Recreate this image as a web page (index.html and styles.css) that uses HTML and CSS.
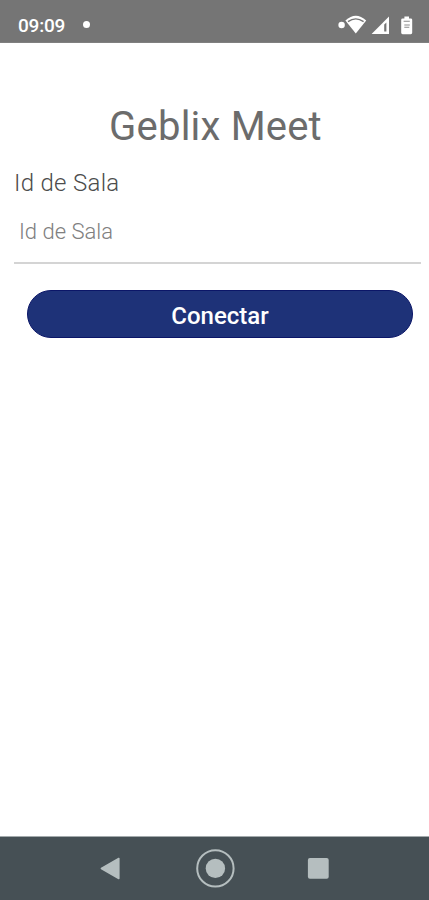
FILE: index.html
```html
<!DOCTYPE html>
<html lang="es">
<head>
    <meta charset="UTF-8">
    <meta name="viewport" content="width=device-width, initial-scale=1.0">
    <title>Geblix Meet</title>
    <link rel="stylesheet" href="styles.css">
</head>
<body>
    <header class="status-bar">
        <span class="time">09:09</span>
        <span class="dot"></span>
        <svg class="status-icons" width="78" height="24" viewBox="0 0 78 24">
            <circle cx="4.6" cy="12" r="3.2" fill="#fff"/>
            <path d="M8.4 7.6 Q18.8 -2.2 29.2 7.6 L18.8 20.4 Z" fill="#fff"/>
            <path d="M11 8.6 Q18.8 3.2 26.6 8.6" fill="none" stroke="#757575" stroke-width="1.4"/>
            <path d="M34.6 21 L52 3.6 V21 Z" fill="#fff"/>
            <path d="M47.2 11.6 L49.4 9.6 V18.4 H47.2 Z" fill="#757575"/>
            <path d="M67.4 3.6 H72 V5.4 H73.8 Q75.2 5.4 75.2 6.8 V19.8 Q75.2 21.2 73.8 21.2 H65.6 Q64.2 21.2 64.2 19.8 V6.8 Q64.2 5.4 65.6 5.4 H67.4 Z" fill="#fff"/>
            <path d="M66.6 8.2 H72.8 M67.3 12 H72.8 M67.3 14.2 H72.3" stroke="#8b8b8b" stroke-width="1.1"/>
        </svg>
    </header>

    <main class="container">
        <h1>Geblix Meet</h1>
        <label for="roomId">Id de Sala</label>
        <input type="text" id="roomId" placeholder="Id de Sala">
        <button type="button">Conectar</button>
    </main>

    <nav class="nav-bar">
        <svg class="nav-icon" width="40" height="40" viewBox="0 0 40 40">
            <path d="M10.4 20.5 L27.8 10.5 V30.5 Z" fill="#b5bebf" stroke="#b5bebf" stroke-width="1.6" stroke-linejoin="round"/>
        </svg>
        <svg class="nav-icon" width="40" height="40" viewBox="0 0 40 40">
            <circle cx="20.4" cy="20.4" r="18.2" fill="none" stroke="#b5bebf" stroke-width="2"/>
            <circle cx="20.4" cy="20.4" r="9.7" fill="#b5bebf"/>
        </svg>
        <svg class="nav-icon" width="40" height="40" viewBox="0 0 40 40">
            <rect x="8.9" y="10" width="20.8" height="20.8" rx="2" fill="#b5bebf"/>
        </svg>
    </nav>
</body>
</html>
```

FILE: styles.css
```css
* {
    box-sizing: border-box;
}
body {
    display: flex;
    flex-direction: column;
    height: 900px;
    margin: 0;
    font-family: Roboto, sans-serif;
    background: #fff;
}
.status-bar {
    display: flex;
    align-items: center;
    height: 43px;
    padding: 8px 14px 0 18px;
    background: #757575;
    border-bottom: 1px solid #808080;
    color: #fff;
}
.time {
    font-size: 19px;
    font-weight: 500;
    letter-spacing: -0.2px;
}
.dot {
    width: 7px;
    height: 7px;
    margin-left: 18px;
    margin-top: -2px;
    border-radius: 50%;
    background: #fff;
}
.status-icons {
    margin-left: auto;
    margin-top: -1px;
}
.container {
    display: flex;
    flex: 1;
    flex-direction: column;
    padding: 60px 8px 0 14px;
}
h1 {
    margin: 0 0 12px;
    padding-right: 4px;
    font-size: 40px;
    font-weight: 400;
    line-height: 48px;
    letter-spacing: 0.2px;
    text-align: center;
    color: #6c6c6c;
}
label {
    font-size: 24px;
    font-weight: 300;
    line-height: 40px;
    letter-spacing: 0.3px;
    color: #4c4c4c;
}
input {
    height: 61px;
    padding: 0 5px 2px;
    border: none;
    border-bottom: 2px solid #d4d4d4;
    background: none;
    font-family: inherit;
    font-size: 22px;
    font-weight: 300;
}
input::placeholder {
    color: #808080;
}
button {
    height: 48px;
    margin: 26px 8px 0 13px;
    padding: 3px 0 0;
    border: 1px solid #0b1668;
    border-radius: 24px;
    background: #1e3278;
    color: #fff;
    font-family: inherit;
    font-size: 24px;
    font-weight: 500;
}
.nav-bar {
    display: flex;
    justify-content: center;
    gap: 64px;
    height: 64px;
    padding-top: 11px;
    border-top: 1px solid #a3aaac;
    background: #465055;
}
```
